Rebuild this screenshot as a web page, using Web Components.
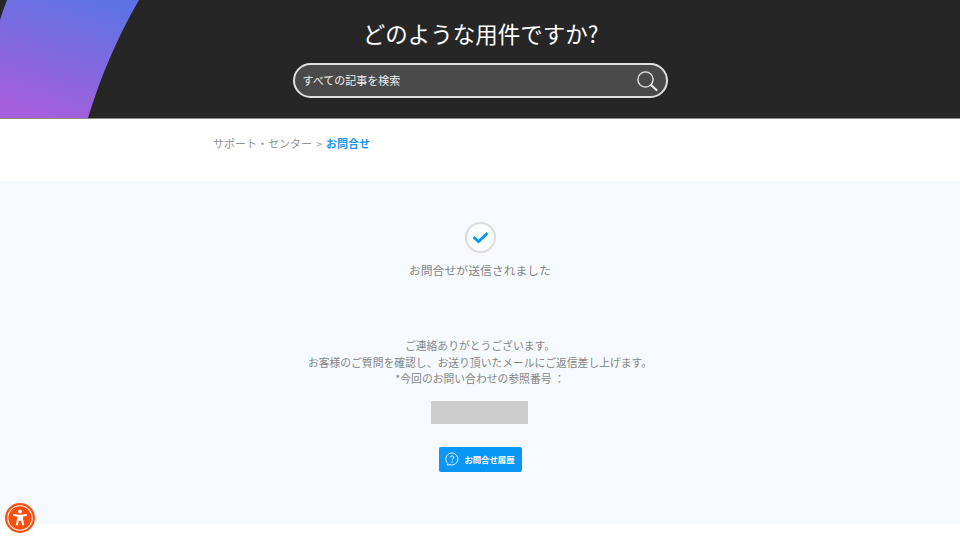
<!DOCTYPE html>
<html lang="ja">
<head>
<meta charset="utf-8">
<title>お問合せ</title>
<style>
  html, body { margin: 0; background: #fff; }
  body { font-family: "Noto Sans CJK JP", "Noto Sans", sans-serif; color: #888; }
</style>
</head>
<body>
<support-hero heading="どのような用件ですか?" placeholder="すべての記事を検索"></support-hero>
<support-crumbs>
  <span>サポート・センター</span>
  <span slot="current">お問合せ</span>
</support-crumbs>
<request-panel>
  <span slot="status">お問合せが送信されました</span>
  <p>ご連絡ありがとうございます。</p>
  <p>お客様のご質問を確認し、お送り頂いたメールにご返信差し上げます。</p>
  <p>*今回のお問い合わせの参照番号 ：</p>
  <span slot="action">お問合せ履歴</span>
</request-panel>
<a11y-button></a11y-button>

<script>
  class SupportHero extends HTMLElement {
    constructor() {
      super();
      const root = this.attachShadow({mode: 'open'});
      root.innerHTML = `
        <style>
          :host { display: block; position: relative; height: 118px; background: #262626; border-bottom: 1px solid #8a8a8a; overflow: hidden; }
          svg.art { position: absolute; left: 0; top: 0; }
          .inner { position: relative; display: flex; flex-direction: column; align-items: center; padding-top: 16px; }
          h1 { margin: 0 0 12px 1px; height: 35px; line-height: 35px; font-size: 22.5px; font-weight: 400; color: #fff; }
          .search { box-sizing: border-box; width: 375px; height: 35px; margin-left: 1px; padding: 0 8px 0 7.5px; display: flex; align-items: center; justify-content: space-between;
            background: #4a4a4a; border: 2px solid #e0e0e0; border-radius: 18px; color: #f0f0f0; font-size: 11px; }
          .ph { padding-bottom: 2px; }
          .search svg { display: block; }
        </style>
        <svg class="art" width="160" height="118" viewBox="0 0 160 118">
          <defs>
            <linearGradient id="arc" gradientUnits="userSpaceOnUse" x1="90" y1="0" x2="50" y2="118">
              <stop offset="0" stop-color="#5f72e4"/>
              <stop offset="1" stop-color="#a55fdc"/>
            </linearGradient>
          </defs>
          <path d="M7 0 L139 0 C117 38 100 78 88 118 L0 118 L0 20 Q3 10 7 0 Z" fill="url(#arc)"/>
        </svg>
        <div class="inner">
          <h1></h1>
          <div class="search">
            <span class="ph"></span>
            <svg width="22" height="22" viewBox="0 0 22 22" fill="none" stroke="#e8e8e8">
              <circle cx="9.5" cy="9.5" r="7.6" stroke-width="1.4"/>
              <path d="M15 15 L20.5 20" stroke-width="2.2" stroke-linecap="round"/>
            </svg>
          </div>
        </div>`;
      root.querySelector('h1').textContent = this.getAttribute('heading');
      root.querySelector('.ph').textContent = this.getAttribute('placeholder');
    }
  }

  class SupportCrumbs extends HTMLElement {
    constructor() {
      super();
      this.attachShadow({mode: 'open'}).innerHTML = `
        <style>
          :host { display: block; box-sizing: border-box; height: 62px; padding: 15px 0 0 213px; font-size: 11px; line-height: 18px; color: #8f8f8f; }
          .sep { margin: 0 4px 0 2px; font-size: 10px; }
          .cur { color: #1e96f0; font-weight: 700; }
        </style>
        <slot></slot><span class="sep">&gt;</span><span class="cur"><slot name="current"></slot></span>`;
    }
  }

  class RequestPanel extends HTMLElement {
    constructor() {
      super();
      this.attachShadow({mode: 'open'}).innerHTML = `
        <style>
          :host { display: flex; flex-direction: column; align-items: center; box-sizing: border-box; height: 343px; padding-top: 41px; background: #f6fafe; font-size: 10.8px; color: #858585; }
          .tick { box-sizing: border-box; width: 31px; height: 31px; border: 2px solid #dcdcdc; border-radius: 50%; background: #fbfcfe; display: flex; align-items: center; justify-content: center; }
          .status { margin-top: 7px; height: 20px; line-height: 20px; font-size: 11.85px; }
          .message { margin-top: 57px; text-align: center; line-height: 16.5px; }
          ::slotted(p) { margin: 0; }
          .ref { margin: 14px 1px 0 0; width: 97px; height: 23px; background: #cccccc; }
          .btn { margin-top: 23px; box-sizing: border-box; width: 83px; height: 25px; background: #0a96f5; border-radius: 2px; color: #fff; font-size: 8.4px; font-weight: 700; display: flex; align-items: center; justify-content: center; gap: 5px; }
          .btn svg { display: block; }
        </style>
        <div class="tick">
          <svg width="17" height="13" viewBox="0 0 17 13" fill="none"><path d="M1.5 6 L6.5 10.5 L15.5 2" stroke="#0a96f5" stroke-width="2.8"/></svg>
        </div>
        <div class="status"><slot name="status"></slot></div>
        <div class="message"><slot></slot></div>
        <div class="ref"></div>
        <div class="btn">
          <svg width="14" height="14" viewBox="0 0 14 14" fill="none" stroke="#fff" stroke-width="0.9">
            <path d="M3 11.6 A6 6 0 1 1 5 12.7 L2 13 Z"/>
            <path d="M5.4 5.4 A1.7 1.7 0 1 1 7.8 7 Q7 7.4 7 8.4"/>
            <circle cx="7" cy="10" r="0.3"/>
          </svg>
          <span><slot name="action"></slot></span>
        </div>`;
    }
  }

  class A11yButton extends HTMLElement {
    constructor() {
      super();
      this.attachShadow({mode: 'open'}).innerHTML = `
        <style>
          :host { position: fixed; left: 5px; top: 503px; width: 30px; height: 30px; display: block; }
          svg { display: block; }
        </style>
        <svg width="30" height="30" viewBox="0 0 30 30">
          <circle cx="15" cy="15" r="15" fill="#fc4f0e"/>
          <circle cx="15" cy="15" r="12.2" fill="none" stroke="#fff" stroke-width="1.1"/>
          <circle cx="15" cy="8.6" r="1.9" fill="#fff"/>
          <path d="M9 12 L13 12.8 L13 16 L12 21.5 M21 12 L17 12.8 L17 16 L18 21.5 M13 12.8 L17 12.8 M13 16 L17 16 M15 12.8 L15 17" fill="none" stroke="#fff" stroke-width="2" stroke-linecap="round" stroke-linejoin="round"/>
        </svg>`;
    }
  }

  customElements.define('support-hero', SupportHero);
  customElements.define('support-crumbs', SupportCrumbs);
  customElements.define('request-panel', RequestPanel);
  customElements.define('a11y-button', A11yButton);
</script>
</body>
</html>
